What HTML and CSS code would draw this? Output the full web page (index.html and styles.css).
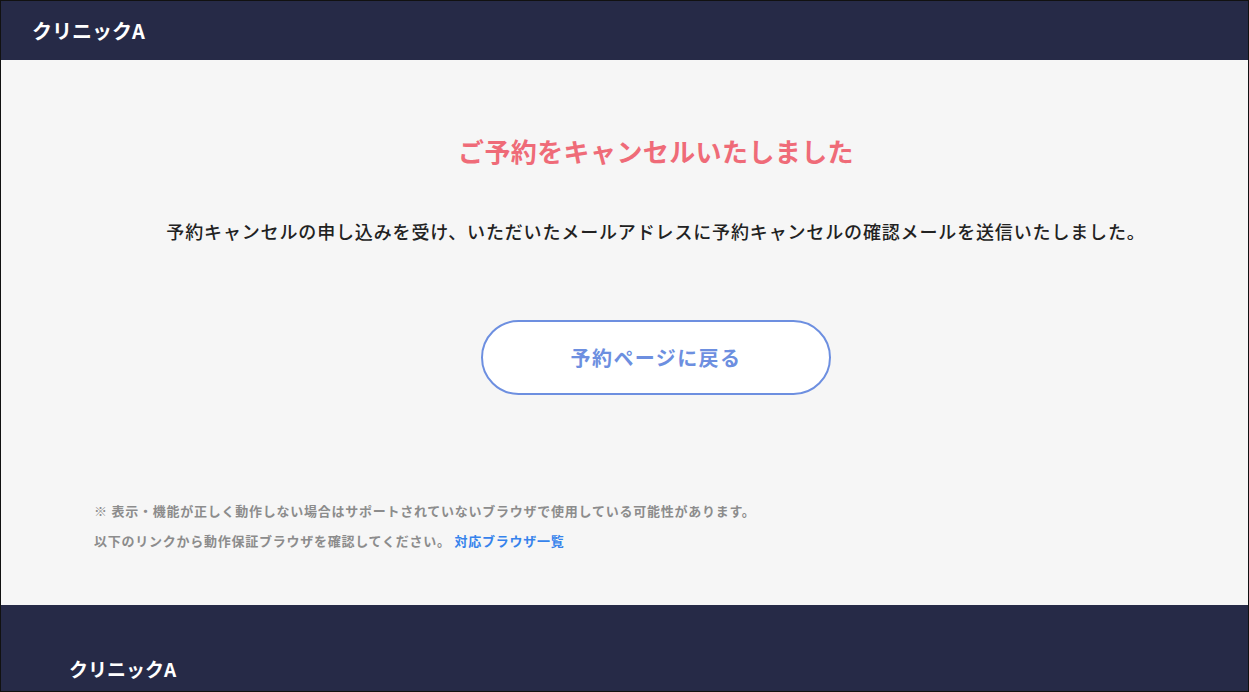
FILE: index.html
```html
<!DOCTYPE html>
<html lang="ja">
<head>
<meta charset="utf-8">
<title>予約キャンセル完了 | クリニックA</title>
<link rel="stylesheet" href="styles.css">
</head>
<body>
<div class="page">
  <header class="site-header">
    <div class="logo logo-header">クリニックA</div>
  </header>
  <main class="main">
    <h1 class="title">ご予約をキャンセルいたしました</h1>
    <p class="message">予約キャンセルの申し込みを受け、いただいたメールアドレスに予約キャンセルの確認メールを送信いたしました。</p>
    <div class="actions">
      <a class="btn-back" href="#">予約ページに戻る</a>
    </div>
    <div class="notes">
      <p class="note">※ 表示・機能が正しく動作しない場合はサポートされていないブラウザで使用している可能性があります。</p>
      <p class="note">以下のリンクから動作保証ブラウザを確認してください。 <a class="note-link" href="#">対応ブラウザ一覧</a></p>
    </div>
  </main>
  <footer class="site-footer">
    <div class="logo">クリニックA</div>
  </footer>
</div>
</body>
</html>
```

FILE: styles.css
```css
html, body {
  margin: 0;
  padding: 0;
}
body {
  font-family: "Noto Sans CJK JP", "Noto Sans", sans-serif;
  background: #f6f6f6;
}
.page {
  height: 100vh;
  box-sizing: border-box;
  border: 1px solid #111;
  overflow: hidden;
  display: flex;
  flex-direction: column;
  background: #f6f6f6;
}
.site-header {
  height: 59px;
  background: #262a47;
  display: flex;
  align-items: center;
  padding-left: 31px;
  flex-shrink: 0;
}
.logo {
  color: #fff;
  font-size: 19px;
  font-weight: 700;
  line-height: 28px;
}
.logo-header {
  font-size: 20px;
}
.main {
  height: 545px;
  flex-shrink: 0;
  box-sizing: border-box;
  padding: 71px 0 0 63px;
  display: flex;
  flex-direction: column;
  align-items: center;
}
.title {
  margin: 0;
  font-size: 26px;
  line-height: 39px;
  font-weight: 700;
  color: #ef6b78;
  letter-spacing: 0.4px;
}
.message {
  margin: 48px 0 0;
  font-size: 18px;
  line-height: 27px;
  font-weight: 500;
  color: #222;
  letter-spacing: 0.85px;
}
.actions {
  margin-top: 75px;
}
.btn-back {
  display: flex;
  align-items: center;
  justify-content: center;
  width: 350px;
  height: 75px;
  box-sizing: border-box;
  border: 2px solid #6d8fe0;
  border-radius: 40px;
  background: #fff;
  color: #6d8fe0;
  font-size: 20px;
  font-weight: 700;
  letter-spacing: 1.4px;
  text-decoration: none;
}
.notes {
  margin: 101px 0 0 -63px;
  width: 1061px;
}
.note {
  margin: 0;
  font-size: 13px;
  line-height: 30px;
  font-weight: 700;
  color: #8c8c8c;
  letter-spacing: 0.75px;
}
.note-link {
  color: #3683ec;
  text-decoration: none;
}
.site-footer {
  flex: 1;
  background: #262a47;
  padding: 50px 0 0 68px;
}
```
